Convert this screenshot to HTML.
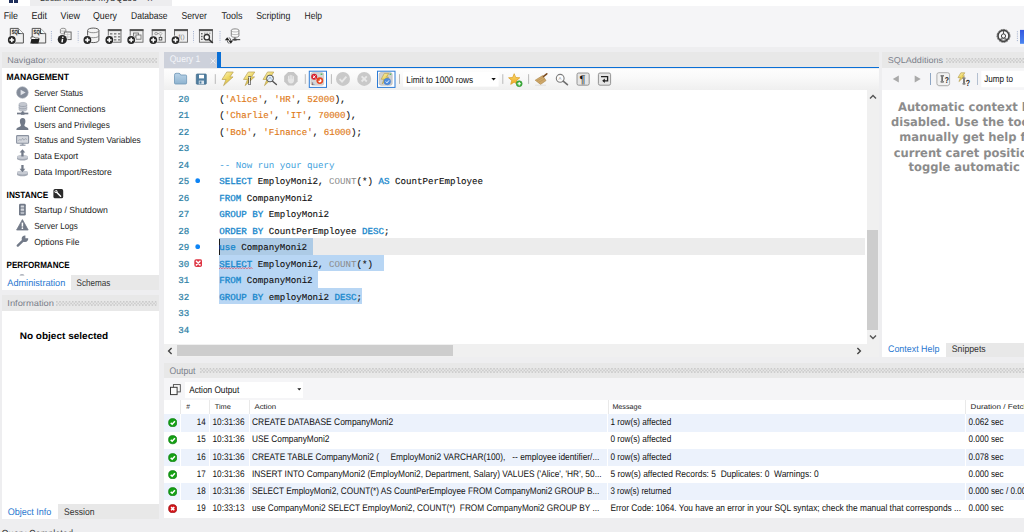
<!DOCTYPE html>
<html><head><meta charset="utf-8"><title>MySQL Workbench</title>
<style>
html,body{margin:0;padding:0}
body{width:1024px;height:532px;overflow:hidden;position:relative;background:#eeeef0}
.r{position:absolute;margin:0;padding:0;overflow:hidden}
text{white-space:pre;text-rendering:geometricPrecision}
text.s{font-family:"Liberation Sans",sans-serif}
text.m{font-family:"Liberation Mono",monospace}
text.d{font-family:"DejaVu Sans","Liberation Sans",sans-serif}
text.c{font-family:"DejaVu Sans Condensed","DejaVu Sans",sans-serif}
</style></head><body>
<div class="r" style="left:0.00px;top:0.00px;width:1024.00px;height:5.60px;background:#ffffff;"></div>
<div class="r" style="left:30.00px;top:0.00px;width:142.00px;height:5.60px;background:#ededef;"></div>
<div class="r" style="left:8.50px;top:0.00px;width:4.00px;height:2.60px;background:#1f2f5c;"></div>
<div class="r" style="left:14.00px;top:0.00px;width:4.00px;height:2.60px;background:#1f2f5c;"></div>
<div class="r" style="left:0.00px;top:5.60px;width:1024.00px;height:41.30px;background:#f5f5f7;"></div>
<div class="r" style="left:1.50px;top:52.20px;width:157.50px;height:15.50px;background:#e8e8e8;"></div>
<div class="r" style="left:47.00px;top:57.60px;width:110.00px;height:5.00px;background:transparent;background-image:radial-gradient(circle at 0.8px 0.8px,#c2c2c2 0.45px,rgba(194,194,194,0) 0.9px),radial-gradient(circle at 2.4px 2.45px,#c2c2c2 0.45px,rgba(194,194,194,0) 0.9px);background-size:3.2px 3.3px;"></div>
<div class="r" style="left:1.50px;top:67.70px;width:157.50px;height:207.70px;background:#fff;"></div>
<div class="r" style="left:1.50px;top:275.40px;width:157.50px;height:14.60px;background:#e8e8e8;"></div>
<div class="r" style="left:1.50px;top:275.40px;width:69.50px;height:14.60px;background:#fff;"></div>
<div class="r" style="left:1.50px;top:295.40px;width:157.50px;height:15.80px;background:#e8e8e8;"></div>
<div class="r" style="left:56.40px;top:301.20px;width:100.60px;height:5.00px;background:transparent;background-image:radial-gradient(circle at 0.8px 0.8px,#c2c2c2 0.45px,rgba(194,194,194,0) 0.9px),radial-gradient(circle at 2.4px 2.45px,#c2c2c2 0.45px,rgba(194,194,194,0) 0.9px);background-size:3.2px 3.3px;"></div>
<div class="r" style="left:1.50px;top:311.20px;width:157.50px;height:193.20px;background:#fff;"></div>
<div class="r" style="left:1.50px;top:504.40px;width:157.50px;height:14.50px;background:#e8e8e8;"></div>
<div class="r" style="left:1.50px;top:504.40px;width:56.70px;height:14.50px;background:#fff;"></div>
<div class="r" style="left:164.00px;top:51.90px;width:715.00px;height:16.20px;background:#e8e8e8;"></div>
<div class="r" style="left:164.00px;top:51.90px;width:52.50px;height:16.20px;background:#cdd1db;"></div>
<div class="r" style="left:216.50px;top:51.90px;width:4.60px;height:16.60px;background:#0a6fd6;"></div>
<div class="r" style="left:216.50px;top:66.80px;width:662.50px;height:1.70px;background:#0a6fd6;"></div>
<svg class="r" style="left:209.50px;top:57.50px" width="6.00" height="6.00" viewBox="0 0 6.00 6.00"><path d="M0.5 0.5L5.5 5.5M5.5 0.5L0.5 5.5" stroke="#eef1f6" stroke-width="0.9" fill="none"/></svg>
<div class="r" style="left:164.00px;top:68.50px;width:715.00px;height:21.50px;background:linear-gradient(#fdfdfd,#fafafa 35%,#efefef);"></div>
<div class="r" style="left:164.00px;top:90.00px;width:703.00px;height:254.30px;background:#fff;"></div>
<div class="r" style="left:219.00px;top:238.45px;width:646.00px;height:16.50px;background:#ececec;"></div>
<div class="r" style="left:219.00px;top:238.45px;width:93.50px;height:16.55px;background:#adcbe6;"></div>
<div class="r" style="left:219.00px;top:254.95px;width:165.00px;height:16.55px;background:#b8d6f4;"></div>
<div class="r" style="left:219.00px;top:271.45px;width:99.00px;height:16.55px;background:#b8d6f4;"></div>
<div class="r" style="left:219.00px;top:287.95px;width:143.00px;height:16.55px;background:#b8d6f4;"></div>
<div class="r" style="left:218.90px;top:238.50px;width:1.30px;height:16.40px;background:#1a1a1a;"></div>
<svg class="r" style="left:219.00px;top:266.60px" width="33.50" height="2.60" viewBox="0 0 33.50 2.60"><path d="M0 1.9 L1.4 0.5 L2.8 1.9 L4.2 0.5 L5.6 1.9 L7 0.5 L8.4 1.9 L9.8 0.5 L11.2 1.9 L12.6 0.5 L14 1.9 L15.4 0.5 L16.8 1.9 L18.2 0.5 L19.6 1.9 L21 0.5 L22.4 1.9 L23.8 0.5 L25.2 1.9 L26.6 0.5 L28 1.9 L29.4 0.5 L30.8 1.9 L32.2 0.5 L33.5 1.9" stroke="#e04a58" stroke-width="0.75" fill="none"/></svg>
<svg class="r" style="left:195.00px;top:177.70px" width="5.40" height="5.40" viewBox="0 0 5.40 5.40"><circle cx="2.7" cy="2.7" r="2.4" fill="#0d84f5"/></svg>
<svg class="r" style="left:195.00px;top:243.70px" width="5.40" height="5.40" viewBox="0 0 5.40 5.40"><circle cx="2.7" cy="2.7" r="2.4" fill="#0d84f5"/></svg>
<svg class="r" style="left:193.70px;top:258.60px" width="8.40" height="8.20" viewBox="0 0 8.40 8.20"><rect x="0.3" y="0.3" width="7.8" height="7.6" rx="1.8" fill="#de3644"/><path d="M2.4 2.3L6 5.9M6 2.3L2.4 5.9" stroke="#fff" stroke-width="1.5" stroke-linecap="round"/></svg>
<div class="r" style="left:866.80px;top:90.00px;width:12.20px;height:254.30px;background:#f0f0f0;"></div>
<div class="r" style="left:866.80px;top:230.00px;width:11.20px;height:99.70px;background:#cdcdcd;"></div>
<svg class="r" style="left:869.00px;top:94.00px" width="8.00" height="6.00" viewBox="0 0 8.00 6.00"><path d="M1 4.6L4 1.6L7 4.6" stroke="#555" stroke-width="1.4" fill="none"/></svg>
<svg class="r" style="left:869.00px;top:334.00px" width="8.00" height="6.00" viewBox="0 0 8.00 6.00"><path d="M1 1.4L4 4.4L7 1.4" stroke="#555" stroke-width="1.4" fill="none"/></svg>
<div class="r" style="left:164.00px;top:344.30px;width:715.00px;height:12.70px;background:#f0f0f0;"></div>
<div class="r" style="left:177.30px;top:345.00px;width:276.20px;height:11.40px;background:#cdcdcd;"></div>
<svg class="r" style="left:166.50px;top:347.00px" width="6.00" height="8.00" viewBox="0 0 6.00 8.00"><path d="M4.6 1L1.6 4L4.6 7" stroke="#444" stroke-width="1.4" fill="none"/></svg>
<svg class="r" style="left:855.50px;top:347.00px" width="6.00" height="8.00" viewBox="0 0 6.00 8.00"><path d="M1.4 1L4.4 4L1.4 7" stroke="#444" stroke-width="1.4" fill="none"/></svg>
<div class="r" style="left:164.30px;top:362.80px;width:859.70px;height:15.40px;background:#e8e8e8;"></div>
<div class="r" style="left:199.50px;top:367.90px;width:824.50px;height:5.00px;background:transparent;background-image:radial-gradient(circle at 0.8px 0.8px,#c2c2c2 0.45px,rgba(194,194,194,0) 0.9px),radial-gradient(circle at 2.4px 2.45px,#c2c2c2 0.45px,rgba(194,194,194,0) 0.9px);background-size:3.2px 3.3px;"></div>
<div class="r" style="left:164.00px;top:378.00px;width:860.00px;height:21.60px;background:#f5f5f7;"></div>
<div class="r" style="left:185.40px;top:382.00px;width:118.00px;height:15.90px;background:#fff;"></div>
<svg class="r" style="left:296.50px;top:388.00px" width="4.50" height="3.00" viewBox="0 0 4.50 3.00"><path d="M0.3 0.3L4.2 0.3L2.25 2.6Z" fill="#222"/></svg>
<svg class="r" style="left:169.00px;top:383.00px" width="13.00" height="13.00" viewBox="0 0 13.00 13.00"><rect x="4.4" y="1.6" width="6.9" height="7.3" fill="#fafafa" stroke="#4a4a4a" stroke-width="0.9"/><rect x="1.5" y="4.3" width="6.6" height="7.3" fill="#fafafa" stroke="#3a3a3a" stroke-width="1"/></svg>
<div class="r" style="left:164.00px;top:399.60px;width:860.00px;height:118.60px;background:#fff;"></div>
<div class="r" style="left:164.00px;top:414.40px;width:16.30px;height:17.20px;background:#ecf2fc;"></div>
<div class="r" style="left:181.10px;top:414.40px;width:27.90px;height:17.20px;background:#ecf2fc;"></div>
<div class="r" style="left:209.80px;top:414.40px;width:39.50px;height:17.20px;background:#ecf2fc;"></div>
<div class="r" style="left:250.10px;top:414.40px;width:357.40px;height:17.20px;background:#ecf2fc;"></div>
<div class="r" style="left:608.30px;top:414.40px;width:356.90px;height:17.20px;background:#ecf2fc;"></div>
<div class="r" style="left:966.00px;top:414.40px;width:58.50px;height:17.20px;background:#ecf2fc;"></div>
<div class="r" style="left:164.00px;top:448.80px;width:16.30px;height:17.20px;background:#ecf2fc;"></div>
<div class="r" style="left:181.10px;top:448.80px;width:27.90px;height:17.20px;background:#ecf2fc;"></div>
<div class="r" style="left:209.80px;top:448.80px;width:39.50px;height:17.20px;background:#ecf2fc;"></div>
<div class="r" style="left:250.10px;top:448.80px;width:357.40px;height:17.20px;background:#ecf2fc;"></div>
<div class="r" style="left:608.30px;top:448.80px;width:356.90px;height:17.20px;background:#ecf2fc;"></div>
<div class="r" style="left:966.00px;top:448.80px;width:58.50px;height:17.20px;background:#ecf2fc;"></div>
<div class="r" style="left:164.00px;top:483.20px;width:16.30px;height:17.20px;background:#ecf2fc;"></div>
<div class="r" style="left:181.10px;top:483.20px;width:27.90px;height:17.20px;background:#ecf2fc;"></div>
<div class="r" style="left:209.80px;top:483.20px;width:39.50px;height:17.20px;background:#ecf2fc;"></div>
<div class="r" style="left:250.10px;top:483.20px;width:357.40px;height:17.20px;background:#ecf2fc;"></div>
<div class="r" style="left:608.30px;top:483.20px;width:356.90px;height:17.20px;background:#ecf2fc;"></div>
<div class="r" style="left:966.00px;top:483.20px;width:58.50px;height:17.20px;background:#ecf2fc;"></div>
<div class="r" style="left:180.30px;top:400.00px;width:0.80px;height:14.30px;background:#e9e9e9;"></div>
<div class="r" style="left:209.00px;top:400.00px;width:0.80px;height:14.30px;background:#e9e9e9;"></div>
<div class="r" style="left:249.30px;top:400.00px;width:0.80px;height:14.30px;background:#e9e9e9;"></div>
<div class="r" style="left:607.50px;top:400.00px;width:0.80px;height:14.30px;background:#e9e9e9;"></div>
<div class="r" style="left:965.20px;top:400.00px;width:0.80px;height:14.30px;background:#e9e9e9;"></div>
<svg class="r" style="left:167.50px;top:418.10px" width="9.40" height="9.40" viewBox="0 0 9.40 9.40"><circle cx="4.7" cy="4.7" r="4.1" fill="#14a014" stroke="#0c7c10" stroke-width="0.7"/><path d="M2.7 4.9L4.2 6.3L6.9 3.3" stroke="#fff" stroke-width="1.5" fill="none"/></svg>
<svg class="r" style="left:167.50px;top:435.30px" width="9.40" height="9.40" viewBox="0 0 9.40 9.40"><circle cx="4.7" cy="4.7" r="4.1" fill="#14a014" stroke="#0c7c10" stroke-width="0.7"/><path d="M2.7 4.9L4.2 6.3L6.9 3.3" stroke="#fff" stroke-width="1.5" fill="none"/></svg>
<svg class="r" style="left:167.50px;top:452.50px" width="9.40" height="9.40" viewBox="0 0 9.40 9.40"><circle cx="4.7" cy="4.7" r="4.1" fill="#14a014" stroke="#0c7c10" stroke-width="0.7"/><path d="M2.7 4.9L4.2 6.3L6.9 3.3" stroke="#fff" stroke-width="1.5" fill="none"/></svg>
<svg class="r" style="left:167.50px;top:469.70px" width="9.40" height="9.40" viewBox="0 0 9.40 9.40"><circle cx="4.7" cy="4.7" r="4.1" fill="#14a014" stroke="#0c7c10" stroke-width="0.7"/><path d="M2.7 4.9L4.2 6.3L6.9 3.3" stroke="#fff" stroke-width="1.5" fill="none"/></svg>
<svg class="r" style="left:167.50px;top:486.90px" width="9.40" height="9.40" viewBox="0 0 9.40 9.40"><circle cx="4.7" cy="4.7" r="4.1" fill="#14a014" stroke="#0c7c10" stroke-width="0.7"/><path d="M2.7 4.9L4.2 6.3L6.9 3.3" stroke="#fff" stroke-width="1.5" fill="none"/></svg>
<svg class="r" style="left:167.50px;top:504.10px" width="9.40" height="9.40" viewBox="0 0 9.40 9.40"><circle cx="4.7" cy="4.7" r="4.1" fill="#d41418" stroke="#931216" stroke-width="0.7"/><path d="M3.1 3.1L6.3 6.3M6.3 3.1L3.1 6.3" stroke="#fff" stroke-width="1.6" fill="none"/></svg>
<div class="r" style="left:882.10px;top:52.20px;width:141.90px;height:15.50px;background:#e8e8e8;"></div>
<div class="r" style="left:946.00px;top:57.60px;width:78.00px;height:5.00px;background:transparent;background-image:radial-gradient(circle at 0.8px 0.8px,#c2c2c2 0.45px,rgba(194,194,194,0) 0.9px),radial-gradient(circle at 2.4px 2.45px,#c2c2c2 0.45px,rgba(194,194,194,0) 0.9px);background-size:3.2px 3.3px;"></div>
<div class="r" style="left:882.10px;top:68.00px;width:141.90px;height:21.60px;background:#f5f5f7;"></div>
<div class="r" style="left:882.10px;top:89.60px;width:141.90px;height:253.40px;background:#fff;"></div>
<div class="r" style="left:882.10px;top:343.00px;width:141.90px;height:14.00px;background:#e8e8e8;"></div>
<div class="r" style="left:882.10px;top:343.00px;width:64.10px;height:14.00px;background:#fff;"></div>
<svg class="r" style="left:892.00px;top:75.00px" width="7.50" height="8.00" viewBox="0 0 7.50 8.00"><path d="M6.8 0.6L0.8 4L6.8 7.4Z" fill="#a9a9a9"/></svg>
<svg class="r" style="left:913.50px;top:75.00px" width="7.50" height="8.00" viewBox="0 0 7.50 8.00"><path d="M0.7 0.6L6.7 4L0.7 7.4Z" fill="#a9a9a9"/></svg>
<div class="r" style="left:929.90px;top:72.80px;width:1.10px;height:12.00px;background:#8ea6c4;"></div>
<div class="r" style="left:977.00px;top:72.80px;width:1.40px;height:12.00px;background:#b3bfd0;"></div>
<svg class="r" style="left:0;top:22px" width="1024" height="28" viewBox="0 22 1024 28"><path d="M10.3 28.4H18.2L23.4 33.6V43H10.3Z" fill="#f0f0f0" stroke="#555" stroke-width="1" stroke-linejoin="round"/><path d="M18.2 28.4V33.6H23.4" fill="#fafafa" stroke="#4a4a4a" stroke-width="0.8"/><text x="11.700000000000001" y="34.0" font-family="Liberation Sans,sans-serif" font-weight="bold" font-size="6" fill="#333" stroke="#333" stroke-width="0.15" textLength="8.499999999999998" lengthAdjust="spacingAndGlyphs">SQL</text><circle cx="11.8" cy="40" r="4.5" fill="#f5f5f7"/><circle cx="11.8" cy="40" r="3.9" fill="#262626"/><path d="M9.5 40H14.100000000000001M11.8 37.7V42.3" stroke="#fff" stroke-width="1.5"/><path d="M32.2 28.4H40.5L45.7 33.6V43H32.2Z" fill="#f0f0f0" stroke="#555" stroke-width="1" stroke-linejoin="round"/><path d="M40.5 28.4V33.6H45.7" fill="#fafafa" stroke="#4a4a4a" stroke-width="0.8"/><text x="33.6" y="34.0" font-family="Liberation Sans,sans-serif" font-weight="bold" font-size="6" fill="#333" stroke="#333" stroke-width="0.15" textLength="8.9" lengthAdjust="spacingAndGlyphs">SQL</text><path d="M30.3 43.4L31.6 38.6H39.6L38.4 43.4Z" fill="#1f1f1f"/><path d="M31 39V37H34.2L35 38H38.6V39" fill="#fff" stroke="#333" stroke-width="0.7"/><path d="M51.4 31V42.3" stroke="#93a3c6" stroke-width="0.8" stroke-dasharray="1.1 1.1"/><path d="M60.4 29.4C60.4 27.9 65.9 27.9 65.9 29.4V33C65.9 34.4 60.4 34.4 60.4 33Z" fill="#f2f2f2" stroke="#7a7a7a" stroke-width="0.8"/><path d="M60.4 30.2C60.4 31.4 65.9 31.4 65.9 30.2" fill="none" stroke="#9a9a9a" stroke-width="0.6"/><rect x="64.3" y="32" width="6.8" height="7.6" fill="#f4f4f4" stroke="#5a5a5a" stroke-width="0.9"/><path d="M64.3 34.5H71M64.3 37H71M67.7 32V39.6" stroke="#bdbdbd" stroke-width="0.6"/><circle cx="62.3" cy="39.5" r="5.1" fill="#f5f5f7"/><circle cx="62.3" cy="39.5" r="4.6" fill="#262626"/><path d="M62.9 36.6L62 42.4" stroke="#fff" stroke-width="1.5" stroke-dasharray="1.3 0.9 6"/><path d="M78.2 31V42.3" stroke="#93a3c6" stroke-width="0.8" stroke-dasharray="1.1 1.1"/><path d="M87.6 30.4C87.6 27.3 98.9 27.3 98.9 30.4V40.2C98.9 43.4 87.6 43.4 87.6 40.2Z" fill="#f4f4f4" stroke="#5c5c5c" stroke-width="1"/><path d="M87.6 30.6C87.6 33.4 98.9 33.4 98.9 30.6M87.6 35.6C87.6 38.4 98.9 38.4 98.9 35.6" fill="none" stroke="#7a7a7a" stroke-width="0.8"/><circle cx="87.4" cy="40" r="4.5" fill="#f5f5f7"/><circle cx="87.4" cy="40" r="3.9" fill="#262626"/><path d="M85.10000000000001 40H89.7M87.4 37.7V42.3" stroke="#fff" stroke-width="1.5"/><rect x="108.3" y="29.6" width="12.700000000000003" height="12.600000000000001" fill="#efefef" stroke="#666" stroke-width="0.9"/><rect x="107.85" y="29.2" width="13.600000000000003" height="1.9" fill="#555"/><rect x="110" y="33" width="2.4" height="1.6" fill="#8c8c8c"/><rect x="114" y="33" width="2.4" height="1.6" fill="#8c8c8c"/><rect x="118" y="33" width="2.4" height="1.6" fill="#8c8c8c"/><rect x="110" y="36" width="2.4" height="1.6" fill="#8c8c8c"/><rect x="114" y="36" width="2.4" height="1.6" fill="#8c8c8c"/><rect x="118" y="36" width="2.4" height="1.6" fill="#8c8c8c"/><rect x="110" y="39" width="2.4" height="1.6" fill="#8c8c8c"/><rect x="114" y="39" width="2.4" height="1.6" fill="#8c8c8c"/><rect x="118" y="39" width="2.4" height="1.6" fill="#8c8c8c"/><circle cx="109.3" cy="40" r="4.5" fill="#f5f5f7"/><circle cx="109.3" cy="40" r="3.9" fill="#262626"/><path d="M107.0 40H111.6M109.3 37.7V42.3" stroke="#fff" stroke-width="1.5"/><rect x="130.2" y="29.6" width="12.800000000000011" height="12.600000000000001" fill="#efefef" stroke="#666" stroke-width="0.9"/><rect x="129.75" y="29.2" width="13.700000000000012" height="1.9" fill="#555"/><rect x="133.4" y="33" width="5" height="4" fill="#e4e4e4" stroke="#666" stroke-width="0.8"/><rect x="136" y="35" width="5" height="4.2" fill="#f4f4f4" stroke="#666" stroke-width="0.8"/><circle cx="131.2" cy="40" r="4.5" fill="#f5f5f7"/><circle cx="131.2" cy="40" r="3.9" fill="#262626"/><path d="M128.89999999999998 40H133.5M131.2 37.7V42.3" stroke="#fff" stroke-width="1.5"/><rect x="152.2" y="29.6" width="13.100000000000023" height="12.600000000000001" fill="#efefef" stroke="#666" stroke-width="0.9"/><rect x="151.75" y="29.2" width="14.000000000000023" height="1.9" fill="#555"/><rect x="154.8" y="32.6" width="2.6" height="2" rx="0.6" fill="none" stroke="#777" stroke-width="0.7"/><path d="M160.5 32L162 33.6L160.5 35.2L159 33.6Z" fill="none" stroke="#888" stroke-width="0.6"/><path d="M157.4 33.6H159M160.5 35.2V37" stroke="#777" stroke-width="0.6"/><rect x="159.2" y="37.4" width="2.6" height="2.6" fill="#fff" stroke="#444" stroke-width="0.9"/><circle cx="153.3" cy="40.1" r="4.5" fill="#f5f5f7"/><circle cx="153.3" cy="40.1" r="3.9" fill="#262626"/><path d="M151.0 40.1H155.60000000000002M153.3 37.800000000000004V42.4" stroke="#fff" stroke-width="1.5"/><rect x="174.5" y="29.6" width="13.0" height="12.600000000000001" fill="#efefef" stroke="#666" stroke-width="0.9"/><rect x="174.05" y="29.2" width="13.9" height="1.9" fill="#555"/><text x="178.6" y="39.2" font-family="Liberation Sans,sans-serif" font-size="6.4" fill="#777">f()</text><circle cx="175.5" cy="40.1" r="4.5" fill="#f5f5f7"/><circle cx="175.5" cy="40.1" r="3.9" fill="#262626"/><path d="M173.2 40.1H177.8M175.5 37.800000000000004V42.4" stroke="#fff" stroke-width="1.5"/><path d="M193.5 31V42.3" stroke="#93a3c6" stroke-width="0.8" stroke-dasharray="1.1 1.1"/><rect x="199.4" y="29.6" width="13.0" height="12.600000000000001" fill="#efefef" stroke="#666" stroke-width="0.9"/><rect x="198.95000000000002" y="29.2" width="13.9" height="1.9" fill="#555"/><rect x="201" y="33" width="1.6" height="1.4" fill="#666"/><rect x="201" y="35.8" width="1.6" height="1.4" fill="#666"/><rect x="201" y="38.6" width="1.6" height="1.4" fill="#666"/><path d="M204 33.2H210.6" stroke="#777" stroke-width="0.8" stroke-dasharray="1.6 0.9"/><circle cx="206.8" cy="37.2" r="2.7" fill="#fafafa" stroke="#333" stroke-width="1.3"/><path d="M208.9 39.3L212.8 43" stroke="#333" stroke-width="1.6"/><path d="M220 31V42.3" stroke="#93a3c6" stroke-width="0.8" stroke-dasharray="1.1 1.1"/><path d="M231.3 30.4C231.3 28.4 238.9 28.4 238.9 30.4V35.8C238.9 37.8 231.3 37.8 231.3 35.8Z" fill="#fbfbfb" stroke="#6a6a6a" stroke-width="0.8"/><path d="M231.3 30.6C231.3 32.4 238.9 32.4 238.9 30.6M231.3 33.3C231.3 35.1 238.9 35.1 238.9 33.3" fill="none" stroke="#8a8a8a" stroke-width="0.6"/><path d="M234.9 37.4V39.4" stroke="#555" stroke-width="1.2"/><path d="M232.4 39.6H240.2" stroke="#555" stroke-width="1.2"/><rect x="233.4" y="38.7" width="3.2" height="1.9" fill="#444"/><path d="M224.8 40.3L227.2 37.2L229.6 40.3Z" fill="#222"/><path d="M228.4 40.6L230.8 43.7L233.2 40.6Z" fill="#222"/><path d="M227.2 40.2Q227.2 43 229.4 43.4M230.8 40.7Q230.8 38 228.8 37.6" stroke="#555" stroke-width="0.9" fill="none"/><circle cx="1003.5" cy="35.9" r="5.5" fill="none" stroke="#444" stroke-width="1.6"/><circle cx="1003.5" cy="35.9" r="6.5" fill="none" stroke="#444" stroke-width="0.9" stroke-dasharray="1 0.7"/><circle cx="1003.5" cy="36" r="2.1" fill="none" stroke="#444" stroke-width="1"/><path d="M1003.5 30.5V34M1000 40L1001.8 37.6M1007 40L1005.2 37.6" stroke="#444" stroke-width="0.9"/><path d="M1000.3 39.6Q1003.5 37.6 1006.7 39.6" stroke="#444" stroke-width="0.9" fill="none"/><path d="M1017.4 31.2V41.8" stroke="#93a3c6" stroke-width="0.8" stroke-dasharray="1.1 1.1"/><defs><linearGradient id="bl" x1="0" y1="0" x2="0" y2="1"><stop offset="0" stop-color="#3457e0"/><stop offset="1" stop-color="#4a86f0"/></linearGradient></defs><rect x="1020" y="29.9" width="5" height="13.9" fill="url(#bl)"/></svg>
<svg class="r" style="left:160px;top:68px" width="864" height="22" viewBox="160 68 864 22"><defs><linearGradient id="lg" x1="0" y1="0" x2="0.6" y2="1"><stop offset="0" stop-color="#fdf7cc"/><stop offset="0.5" stop-color="#efd966"/><stop offset="1" stop-color="#d6b844"/></linearGradient><linearGradient id="fg" x1="0" y1="0" x2="0" y2="1"><stop offset="0" stop-color="#b9d3e8"/><stop offset="1" stop-color="#8eb3cf"/></linearGradient><linearGradient id="st" x1="0" y1="0" x2="0" y2="1"><stop offset="0" stop-color="#fbe070"/><stop offset="1" stop-color="#eea520"/></linearGradient></defs><path d="M174.5 75.2Q174.5 73.3 176 73.3H179Q180.2 73.3 180.6 75H185.6Q186.6 75 186.6 76V83Q186.6 84 185.6 84H175.5Q174.5 84 174.5 83Z" fill="url(#fg)" stroke="#6f97b6" stroke-width="0.8"/><rect x="196.3" y="74" width="10" height="10.2" rx="0.8" fill="#4f7d9f" stroke="#3e6888" stroke-width="0.7"/><rect x="199" y="74.8" width="5" height="3.6" fill="#fff"/><rect x="198.8" y="80.6" width="5.2" height="3.6" fill="#d9e3ec"/><rect x="199.6" y="81.4" width="1.8" height="2.2" fill="#4f7d9f"/><path d="M215.3 74.2V83.9" stroke="#b2b2b2" stroke-width="0.9"/><polygon points="226.75,72.00 233.30,72.00 229.91,76.90 233.07,76.90 223.58,85.60 226.07,79.48 222.00,79.48" fill="url(#lg)" stroke="#b9a254" stroke-width="0.7" stroke-linejoin="round"/><polygon points="248.25,72.00 254.80,72.00 251.41,76.90 254.57,76.90 245.08,85.60 247.57,79.48 243.50,79.48" fill="url(#lg)" stroke="#b9a254" stroke-width="0.7" stroke-linejoin="round"/><path d="M248.2 77.3H250.8M249.5 77.3V84M248.2 84H250.8" stroke="#333" stroke-width="2.2"/><path d="M248.4 77.3H250.6M249.5 77.3V84M248.4 84H250.6" stroke="#fff" stroke-width="0.9"/><polygon points="267.54,72.00 273.80,72.00 270.56,76.90 273.58,76.90 264.51,85.60 266.89,79.48 263.00,79.48" fill="url(#lg)" stroke="#b9a254" stroke-width="0.7" stroke-linejoin="round"/><circle cx="270" cy="78.5" r="3.4" fill="#e3eef8" stroke="#555" stroke-width="1"/><path d="M268.4 79.6L270 77L271.6 79.6" stroke="#8fb0d8" stroke-width="0.8" fill="none"/><path d="M272.6 81.2L276.4 84.6" stroke="#555" stroke-width="1.4" stroke-linecap="round"/><polygon points="297.64,81.49 293.69,85.44 288.11,85.44 284.16,81.49 284.16,75.91 288.11,71.96 293.69,71.96 297.64,75.91" fill="#c6c6c6"/><path d="M288.6 80V76.4M290.2 79V75.4M291.8 79V75.6M293.4 80V76.6" stroke="#e6e6e6" stroke-width="1.2" stroke-linecap="round"/><path d="M287.6 79.2Q288 83.4 291 83.4Q294 83.4 294.2 79.4L292 78.6L288.6 79Z" fill="#e6e6e6"/><path d="M305.3 74.2V83.9" stroke="#b2b2b2" stroke-width="0.9"/><rect x="309.3" y="71.2" width="17.2" height="16.2" fill="#fff" stroke="#2b7bd6" stroke-width="1"/><rect x="310.9" y="72.6" width="12.8" height="12.6" rx="1.8" fill="#d6d6d6" stroke="#b5b5b5" stroke-width="0.5"/><rect x="320.6" y="73.6" width="1.8" height="1.2" fill="#39b54a"/><circle cx="314.2" cy="76.8" r="3" fill="#d81e2c"/><path d="M312.9 75.5L315.5 78.1M315.5 75.5L312.9 78.1" stroke="#fff" stroke-width="1"/><circle cx="319.8" cy="80.6" r="3.4" fill="#e8461e"/><path d="M318.2 80.8A1.7 1.7 0 1 0 319.8 79V80.8Z" fill="#fff"/><text x="311.6" y="84.6" font-family="Liberation Sans,sans-serif" font-size="3.6" font-weight="bold" fill="#222">1.</text><path d="M331.4 74.2V83.9" stroke="#b2b2b2" stroke-width="0.9"/><circle cx="343" cy="78.9" r="7" fill="#c9c9c9"/><path d="M339.6 79.2L342 81.6L346.4 76.6" stroke="#e8e8e8" stroke-width="1.8" fill="none"/><circle cx="364.2" cy="78.9" r="7" fill="#c9c9c9"/><path d="M361.6 76.3L366.8 81.5M366.8 76.3L361.6 81.5" stroke="#e8e8e8" stroke-width="1.8"/><rect x="377.5" y="71.2" width="17.5" height="16.2" fill="#fff" stroke="#2b7bd6" stroke-width="1"/><rect x="379.2" y="72.6" width="13" height="12.6" rx="1.8" fill="#d0d0d0" stroke="#a5a5a5" stroke-width="0.5"/><rect x="389.6" y="73.6" width="1.6" height="1.2" fill="#39b54a"/><polygon points="384.39,73.40 388.80,73.40 386.52,77.22 388.65,77.22 382.26,84.00 383.94,79.23 381.20,79.23" fill="url(#lg)" stroke="#b9a254" stroke-width="0.7" stroke-linejoin="round"/><circle cx="387.3" cy="81.5" r="3.3" fill="#4f8de0" stroke="#3a73c4" stroke-width="0.5"/><path d="M385.8 81.6L387 82.8L389 80.4" stroke="#fff" stroke-width="1" fill="none"/><path d="M399.5 74.2V83.9" stroke="#b2b2b2" stroke-width="0.9"/><rect x="403.1" y="72.2" width="95.5" height="14.4" fill="#fff"/><path d="M491.4 78.1H495.8L493.6 80.5Z" fill="#111"/><path d="M502.8 74.2V83.9" stroke="#b2b2b2" stroke-width="0.9"/><polygon points="514.20,73.70 515.73,77.50 519.81,77.78 516.67,80.40 517.67,84.37 514.20,82.20 510.73,84.37 511.73,80.40 508.59,77.78 512.67,77.50" fill="url(#st)" stroke="#d99a1c" stroke-width="0.7" stroke-linejoin="round"/><circle cx="519.2" cy="83.7" r="3" fill="#3cae3c" stroke="#2c8c2c" stroke-width="0.5"/><path d="M517.5 83.7H520.9M519.2 82V85.4" stroke="#fff" stroke-width="1.1"/><path d="M528.6 74.2V83.9" stroke="#b2b2b2" stroke-width="0.9"/><path d="M535.2 80.2L542.6 75.6L546 80.6L540.6 84.4Z" fill="#cfa86a" stroke="#a98448" stroke-width="0.6"/><path d="M537 81L543.6 77M538.6 82.4L544.8 78.8" stroke="#b08c50" stroke-width="0.5"/><path d="M543.6 76.4L546.8 73.8" stroke="#7a4a1e" stroke-width="1.6" stroke-linecap="round"/><path d="M535 85.2H546" stroke="#d8d8d8" stroke-width="0.7"/><circle cx="560.2" cy="78.3" r="3.9" fill="#fdfdfd" stroke="#7c7c7c" stroke-width="1.1"/><text x="558.6" y="80" font-family="Liberation Sans,sans-serif" font-size="4.4" fill="#999">A</text><path d="M563.2 81.2L567.4 84.6" stroke="#6e6e6e" stroke-width="1.7" stroke-linecap="round"/><rect x="577" y="73" width="12.2" height="12.2" rx="1.6" fill="#e6e6e6" stroke="#7e7e7e" stroke-width="0.8"/><text x="579.6" y="83.4" font-family="Liberation Sans,sans-serif" font-size="11" fill="#111">¶</text><rect x="598.4" y="73" width="12.2" height="12.2" rx="1.6" fill="#e6e6e6" stroke="#7e7e7e" stroke-width="0.8"/><path d="M601 76.6H607.6V80.8H603.4" stroke="#222" stroke-width="1.3" fill="none"/><path d="M604.8 78.6L602.2 80.8L604.8 83Z" fill="#222"/><rect x="936.9" y="72.7" width="12.7" height="12.8" rx="2" fill="#f1f1f1" stroke="#9a9a9a" stroke-width="0.8"/><path d="M938.5 85.9H948" stroke="#c4c4c4" stroke-width="0.8"/><path d="M940.7 75.7H943.7M942.2 75.7V81.7M940.7 81.7H943.7" stroke="#3a3a3a" stroke-width="1.6"/><path d="M941.0 75.7H943.4000000000001M942.2 75.7V81.7M941.0 81.7H943.4000000000001" stroke="#e8e8e8" stroke-width="0.45"/><text x="944.8" y="83.4" font-family="Liberation Sans,sans-serif" font-weight="bold" font-size="8.6" fill="#2a2a2a" transform="translate(944.8 0) scale(0.8 1) translate(-944.8 0)">?</text><polygon points="960.86,72.80 964.80,72.80 962.76,75.97 964.66,75.97 958.95,81.60 960.45,77.64 958.00,77.64" fill="url(#lg)" stroke="#b9a254" stroke-width="0.7" stroke-linejoin="round"/><path d="M962.7 78.2H965.3000000000001M964.0 78.2V83.8M962.7 83.8H965.3000000000001" stroke="#3a3a3a" stroke-width="1.6"/><path d="M963.0 78.2H965.0000000000001M964.0 78.2V83.8M963.0 83.8H965.0000000000001" stroke="#e8e8e8" stroke-width="0.45"/><text x="965.8" y="86.4" font-family="Liberation Sans,sans-serif" font-weight="bold" font-size="8.8" fill="#2a2a2a" transform="translate(965.8 0) scale(0.8 1) translate(-965.8 0)">?</text><rect x="981.3" y="70.8" width="43" height="16.4" fill="#fff"/></svg>
<svg class="r" style="left:0;top:84px" width="70" height="192" viewBox="0 84 70 192"><circle cx="22.4" cy="92.5" r="5.8" fill="#848c9a"/><circle cx="22.4" cy="92.5" r="5.8" fill="none" stroke="#a5abb6" stroke-width="0.6"/><path d="M20.6 89.7L25.6 92.5L20.6 95.3Z" fill="#dfe2e8"/><path d="M19 104C19 101.9 26.8 101.9 26.8 104V109.6C26.8 111.7 19 111.7 19 109.6Z" fill="#c3c7cf" stroke="#9aa0ac" stroke-width="0.5"/><path d="M19 105.3C19 106.9 26.8 106.9 26.8 105.3M19 107.6C19 109.2 26.8 109.2 26.8 107.6" stroke="#8f96a3" stroke-width="0.7" fill="none"/><path d="M22.7 111.2V113.4" stroke="#727a88" stroke-width="1.6"/><path d="M17 113.5H28.3" stroke="#727a88" stroke-width="1.7"/><rect x="20.9" y="112.3" width="3.6" height="2.5" rx="0.6" fill="#727a88"/><path d="M22.7 118C24.7 118 25.5 119.6 25.4 121.4C25.3 123.2 24.6 124.2 24.4 125C24.3 126 25 126.5 26.6 127.2C28.2 127.9 28.4 128.6 28.4 129.9H16.4C16.4 128.6 16.8 127.9 18.6 127.2C20.3 126.5 21 126 20.9 125C20.7 124.2 20 123.2 19.9 121.4C19.8 119.6 20.7 118 22.7 118Z" fill="#727a88"/><rect x="16.6" y="135.6" width="12" height="7.7" rx="0.8" fill="#d3d6dc" stroke="#8a92a0" stroke-width="1.1"/><path d="M18.2 140.6L20 139.4L21.2 140.4L22.6 138.2L23.8 140.2L25.2 138.6L27 139.6" stroke="#8a92a0" stroke-width="0.6" fill="none"/><path d="M22.6 143.4V144.8" stroke="#8a92a0" stroke-width="2"/><path d="M19.8 145.2H25.5" stroke="#8a92a0" stroke-width="1.1"/><path d="M17 157.0C17 154.6 27.9 154.6 27.9 157.0V158.79999999999998C27.9 161.2 17 161.2 17 158.79999999999998Z" fill="#a3a9b4"/><ellipse cx="22.45" cy="157.0" rx="5.45" ry="1.9" fill="#c7cbd3"/><path d="M22.45 149.2L25.3 152.6H23.6V156.4H21.3V152.6H19.6Z" fill="#727a88"/><path d="M17 172.60000000000002C17 170.20000000000002 27.9 170.20000000000002 27.9 172.60000000000002V174.4C27.9 176.8 17 176.8 17 174.4Z" fill="#a3a9b4"/><ellipse cx="22.45" cy="172.60000000000002" rx="5.45" ry="1.9" fill="#c7cbd3"/><path d="M22.45 172.2L25.3 168.8H23.6V165H21.3V168.8H19.6Z" fill="#727a88"/><rect x="53.4" y="189.1" width="9.8" height="9.2" rx="1.6" fill="#2b2b2b"/><path d="M55.6 191.2L60.6 196.2" stroke="#fff" stroke-width="1.5" stroke-linecap="round"/><circle cx="56" cy="191.6" r="1.5" fill="#fff"/><path d="M54.6 190.2L56.4 192" stroke="#2b2b2b" stroke-width="1"/><rect x="19" y="203.8" width="6.8" height="11.8" rx="1.4" fill="#727a88"/><rect x="20.7" y="205.4" width="3.4" height="2.2" rx="0.5" fill="#d5d8de"/><rect x="20.7" y="208.6" width="3.4" height="2.2" rx="0.5" fill="#d5d8de"/><rect x="20.7" y="211.8" width="3.4" height="2.2" rx="0.5" fill="#b5bac4"/><path d="M22.4 219.6L28.2 230H16.6Z" fill="#727a88" stroke="#727a88" stroke-width="0.8" stroke-linejoin="round"/><path d="M22.4 222.6V226.6" stroke="#fff" stroke-width="1.5"/><circle cx="22.4" cy="228.2" r="0.85" fill="#fff"/><path d="M17.8 245.6L24 239.6" stroke="#727a88" stroke-width="2.4" stroke-linecap="round"/><path d="M28.2 238.2A3.3 3.3 0 1 1 25.4 235.5L25.4 238.2Z" fill="#727a88"/><path d="M19.6 275.4C19.6 273.8 24.4 273.8 24.4 275.4Z" fill="#9aa0ac"/></svg>
<svg class="r" style="left:0;top:0" width="1024" height="532" viewBox="0 0 1024 532">
<text class="s" transform="translate(40.00 1.40) scale(0.8725 1)" font-size="10" fill="#333">Local instance MySQL80</text>
<text class="s" transform="translate(147.00 1.60)" font-size="10" fill="#333">×</text>
<text class="s" transform="translate(3.70 18.80) scale(0.8874 1)" font-size="10" fill="#1a1a1a">File</text>
<text class="s" transform="translate(31.50 18.80) scale(0.8995 1)" font-size="10" fill="#1a1a1a">Edit</text>
<text class="s" transform="translate(60.60 18.80) scale(0.9025 1)" font-size="10" fill="#1a1a1a">View</text>
<text class="s" transform="translate(93.00 18.80) scale(0.8813 1)" font-size="10" fill="#1a1a1a">Query</text>
<text class="s" transform="translate(131.00 18.80) scale(0.8526 1)" font-size="10" fill="#1a1a1a">Database</text>
<text class="s" transform="translate(181.40 18.80) scale(0.8623 1)" font-size="10" fill="#1a1a1a">Server</text>
<text class="s" transform="translate(221.60 18.80) scale(0.8953 1)" font-size="10" fill="#1a1a1a">Tools</text>
<text class="s" transform="translate(256.20 18.80) scale(0.8790 1)" font-size="10" fill="#1a1a1a">Scripting</text>
<text class="s" transform="translate(304.50 18.80) scale(0.8509 1)" font-size="10" fill="#1a1a1a">Help</text>
<text class="s" transform="translate(7.30 62.70) scale(1.0638 1)" font-size="8.5" fill="#7b808b">Navigator</text>
<text class="s" transform="translate(6.60 80.00) scale(0.9527 1)" font-size="9" fill="#000" font-weight='bold'>MANAGEMENT</text>
<text class="s" transform="translate(34.20 96.00) scale(0.9106 1)" font-size="8.9" fill="#1a1a1a">Server Status</text>
<text class="s" transform="translate(34.20 112.00) scale(0.9558 1)" font-size="8.9" fill="#1a1a1a">Client Connections</text>
<text class="s" transform="translate(34.20 128.00) scale(0.9287 1)" font-size="8.9" fill="#1a1a1a">Users and Privileges</text>
<text class="s" transform="translate(34.20 143.00) scale(0.9400 1)" font-size="8.9" fill="#1a1a1a">Status and System Variables</text>
<text class="s" transform="translate(34.20 159.00) scale(0.9363 1)" font-size="8.9" fill="#1a1a1a">Data Export</text>
<text class="s" transform="translate(34.20 175.00) scale(0.9709 1)" font-size="8.9" fill="#1a1a1a">Data Import/Restore</text>
<text class="s" transform="translate(6.60 197.60) scale(0.9176 1)" font-size="9" fill="#000" font-weight='bold'>INSTANCE</text>
<text class="s" transform="translate(34.20 213.40) scale(0.9749 1)" font-size="8.9" fill="#1a1a1a">Startup / Shutdown</text>
<text class="s" transform="translate(34.20 229.00) scale(0.9086 1)" font-size="8.9" fill="#1a1a1a">Server Logs</text>
<text class="s" transform="translate(34.20 245.00) scale(0.9540 1)" font-size="8.9" fill="#1a1a1a">Options File</text>
<text class="s" transform="translate(6.60 267.50) scale(0.8950 1)" font-size="9" fill="#000" font-weight='bold'>PERFORMANCE</text>
<text class="s" transform="translate(7.30 285.60) scale(0.9636 1)" font-size="9.5" fill="#2a78d0">Administration</text>
<text class="s" transform="translate(76.50 285.60) scale(0.8535 1)" font-size="9.5" fill="#333">Schemas</text>
<text class="s" transform="translate(7.30 306.00) scale(1.0983 1)" font-size="8.5" fill="#7b808b">Information</text>
<text class="s" transform="translate(19.70 339.10) scale(1.0445 1)" font-size="9.6" fill="#000" font-weight='bold'>No object selected</text>
<text class="s" transform="translate(7.70 515.00) scale(0.9512 1)" font-size="9.5" fill="#2a78d0">Object Info</text>
<text class="s" transform="translate(64.00 515.00) scale(0.9024 1)" font-size="9.5" fill="#333">Session</text>
<text class="s" transform="translate(1.50 537.60) scale(0.7603 1)" font-size="12" fill="#333">Query Completed</text>
<text class="s" transform="translate(169.70 62.00) scale(0.9025 1)" font-size="9.5" fill="#f4f6fa">Query 1</text>
<text class="m" transform="translate(178.30 101.80)" font-size="9.17" fill="#2d7fa6"><tspan fill="#2d7fa6" stroke="#2d7fa6" stroke-width="0.2">20</tspan></text>
<text class="m" transform="translate(178.30 118.30)" font-size="9.17" fill="#2d7fa6"><tspan fill="#2d7fa6" stroke="#2d7fa6" stroke-width="0.2">21</tspan></text>
<text class="m" transform="translate(178.30 134.80)" font-size="9.17" fill="#2d7fa6"><tspan fill="#2d7fa6" stroke="#2d7fa6" stroke-width="0.2">22</tspan></text>
<text class="m" transform="translate(178.30 151.30)" font-size="9.17" fill="#2d7fa6"><tspan fill="#2d7fa6" stroke="#2d7fa6" stroke-width="0.2">23</tspan></text>
<text class="m" transform="translate(178.30 167.80)" font-size="9.17" fill="#2d7fa6"><tspan fill="#2d7fa6" stroke="#2d7fa6" stroke-width="0.2">24</tspan></text>
<text class="m" transform="translate(178.30 184.30)" font-size="9.17" fill="#2d7fa6"><tspan fill="#2d7fa6" stroke="#2d7fa6" stroke-width="0.2">25</tspan></text>
<text class="m" transform="translate(178.30 200.80)" font-size="9.17" fill="#2d7fa6"><tspan fill="#2d7fa6" stroke="#2d7fa6" stroke-width="0.2">26</tspan></text>
<text class="m" transform="translate(178.30 217.30)" font-size="9.17" fill="#2d7fa6"><tspan fill="#2d7fa6" stroke="#2d7fa6" stroke-width="0.2">27</tspan></text>
<text class="m" transform="translate(178.30 233.80)" font-size="9.17" fill="#2d7fa6"><tspan fill="#2d7fa6" stroke="#2d7fa6" stroke-width="0.2">28</tspan></text>
<text class="m" transform="translate(178.30 250.30)" font-size="9.17" fill="#2d7fa6"><tspan fill="#2d7fa6" stroke="#2d7fa6" stroke-width="0.2">29</tspan></text>
<text class="m" transform="translate(178.30 266.80)" font-size="9.17" fill="#2d7fa6"><tspan fill="#2d7fa6" stroke="#2d7fa6" stroke-width="0.2">30</tspan></text>
<text class="m" transform="translate(178.30 283.30)" font-size="9.17" fill="#2d7fa6"><tspan fill="#2d7fa6" stroke="#2d7fa6" stroke-width="0.2">31</tspan></text>
<text class="m" transform="translate(178.30 299.80)" font-size="9.17" fill="#2d7fa6"><tspan fill="#2d7fa6" stroke="#2d7fa6" stroke-width="0.2">32</tspan></text>
<text class="m" transform="translate(178.30 316.30)" font-size="9.17" fill="#2d7fa6"><tspan fill="#2d7fa6" stroke="#2d7fa6" stroke-width="0.2">33</tspan></text>
<text class="m" transform="translate(178.30 332.80)" font-size="9.17" fill="#2d7fa6"><tspan fill="#2d7fa6" stroke="#2d7fa6" stroke-width="0.2">34</tspan></text>
<text class="m" transform="translate(219.20 101.80)" font-size="9.17" fill="#111"><tspan fill="#111" stroke="#111" stroke-width="0.12">(</tspan><tspan fill="#e07a18" stroke="#e07a18" stroke-width="0.15">'Alice'</tspan><tspan fill="#111" stroke="#111" stroke-width="0.12">, </tspan><tspan fill="#e07a18" stroke="#e07a18" stroke-width="0.15">'HR'</tspan><tspan fill="#111" stroke="#111" stroke-width="0.12">, </tspan><tspan fill="#e07a19" stroke="#e07a19" stroke-width="0.15">52000</tspan><tspan fill="#111" stroke="#111" stroke-width="0.12">),</tspan></text>
<text class="m" transform="translate(219.20 118.30)" font-size="9.17" fill="#111"><tspan fill="#111" stroke="#111" stroke-width="0.12">(</tspan><tspan fill="#e07a18" stroke="#e07a18" stroke-width="0.15">'Charlie'</tspan><tspan fill="#111" stroke="#111" stroke-width="0.12">, </tspan><tspan fill="#e07a18" stroke="#e07a18" stroke-width="0.15">'IT'</tspan><tspan fill="#111" stroke="#111" stroke-width="0.12">, </tspan><tspan fill="#e07a19" stroke="#e07a19" stroke-width="0.15">70000</tspan><tspan fill="#111" stroke="#111" stroke-width="0.12">),</tspan></text>
<text class="m" transform="translate(219.20 134.80)" font-size="9.17" fill="#111"><tspan fill="#111" stroke="#111" stroke-width="0.12">(</tspan><tspan fill="#e07a18" stroke="#e07a18" stroke-width="0.15">'Bob'</tspan><tspan fill="#111" stroke="#111" stroke-width="0.12">, </tspan><tspan fill="#e07a18" stroke="#e07a18" stroke-width="0.15">'Finance'</tspan><tspan fill="#111" stroke="#111" stroke-width="0.12">, </tspan><tspan fill="#e07a19" stroke="#e07a19" stroke-width="0.15">61000</tspan><tspan fill="#111" stroke="#111" stroke-width="0.12">);</tspan></text>
<text class="m" transform="translate(219.20 167.80)" font-size="9.17" fill="#111"><tspan fill="#3f9fdc">-- Now run your query</tspan></text>
<text class="m" transform="translate(219.20 184.30)" font-size="9.17" fill="#111"><tspan fill="#1787cc" stroke="#1787cc" stroke-width="0.3">SELECT</tspan><tspan fill="#111" stroke="#111" stroke-width="0.12"> EmployMoni2, </tspan><tspan fill="#8a8a8a">COUNT</tspan><tspan fill="#111" stroke="#111" stroke-width="0.12">(*) </tspan><tspan fill="#1787cc" stroke="#1787cc" stroke-width="0.3">AS</tspan><tspan fill="#111" stroke="#111" stroke-width="0.12"> CountPerEmployee</tspan></text>
<text class="m" transform="translate(219.20 200.80)" font-size="9.17" fill="#111"><tspan fill="#1787cc" stroke="#1787cc" stroke-width="0.3">FROM</tspan><tspan fill="#111" stroke="#111" stroke-width="0.12"> CompanyMoni2</tspan></text>
<text class="m" transform="translate(219.20 217.30)" font-size="9.17" fill="#111"><tspan fill="#1787cc" stroke="#1787cc" stroke-width="0.3">GROUP BY</tspan><tspan fill="#111" stroke="#111" stroke-width="0.12"> EmployMoni2</tspan></text>
<text class="m" transform="translate(219.20 233.80)" font-size="9.17" fill="#111"><tspan fill="#1787cc" stroke="#1787cc" stroke-width="0.3">ORDER BY</tspan><tspan fill="#111" stroke="#111" stroke-width="0.12"> CountPerEmployee </tspan><tspan fill="#1787cc" stroke="#1787cc" stroke-width="0.3">DESC</tspan><tspan fill="#111" stroke="#111" stroke-width="0.12">;</tspan></text>
<text class="m" transform="translate(219.20 250.30)" font-size="9.17" fill="#111"><tspan fill="#1787cc" stroke="#1787cc" stroke-width="0.3">use</tspan><tspan fill="#111" stroke="#111" stroke-width="0.12"> CompanyMoni2</tspan></text>
<text class="m" transform="translate(219.20 266.80)" font-size="9.17" fill="#111"><tspan fill="#1787cc" stroke="#1787cc" stroke-width="0.3">SELECT</tspan><tspan fill="#111" stroke="#111" stroke-width="0.12"> EmployMoni2, </tspan><tspan fill="#8a8a8a">COUNT</tspan><tspan fill="#111" stroke="#111" stroke-width="0.12">(*) </tspan></text>
<text class="m" transform="translate(219.20 283.30)" font-size="9.17" fill="#111"><tspan fill="#1787cc" stroke="#1787cc" stroke-width="0.3">FROM</tspan><tspan fill="#111" stroke="#111" stroke-width="0.12"> CompanyMoni2</tspan></text>
<text class="m" transform="translate(219.20 299.80)" font-size="9.17" fill="#111"><tspan fill="#1787cc" stroke="#1787cc" stroke-width="0.3">GROUP BY</tspan><tspan fill="#111" stroke="#111" stroke-width="0.12"> employMoni2 </tspan><tspan fill="#1787cc" stroke="#1787cc" stroke-width="0.3">DESC</tspan><tspan fill="#111" stroke="#111" stroke-width="0.12">;</tspan></text>
<text class="s" transform="translate(169.60 374.00) scale(0.9082 1)" font-size="9.5" fill="#7b808b">Output</text>
<text class="s" transform="translate(189.20 393.30) scale(0.8686 1)" font-size="9.5" fill="#111">Action Output</text>
<text class="s" transform="translate(186.20 409.40) scale(0.9504 1)" font-size="7" fill="#222">#</text>
<text class="s" transform="translate(214.70 409.40) scale(1.0526 1)" font-size="7" fill="#222">Time</text>
<text class="s" transform="translate(254.40 409.40) scale(1.1205 1)" font-size="7" fill="#222">Action</text>
<text class="s" transform="translate(612.40 409.40) scale(1.0210 1)" font-size="7" fill="#222">Message</text>
<text class="s" transform="translate(970.60 409.40) scale(1.1526 1)" font-size="7" fill="#222">Duration / Fetch</text>
<text class="s" transform="translate(196.80 425.10) scale(0.8422 1)" font-size="9.5" fill="#111">14</text>
<text class="s" transform="translate(212.50 425.10) scale(0.8653 1)" font-size="9.5" fill="#111">10:31:36</text>
<text class="s" transform="translate(252.00 425.10) scale(0.8885 1)" font-size="9.5" fill="#111">CREATE DATABASE CompanyMoni2</text>
<text class="s" transform="translate(610.40 425.10) scale(0.8614 1)" font-size="9.5" fill="#111">1 row(s) affected</text>
<text class="s" transform="translate(968.50 425.10) scale(0.8540 1)" font-size="9.5" fill="#111">0.062 sec</text>
<text class="s" transform="translate(196.80 442.30) scale(0.8422 1)" font-size="9.5" fill="#111">15</text>
<text class="s" transform="translate(212.50 442.30) scale(0.8653 1)" font-size="9.5" fill="#111">10:31:36</text>
<text class="s" transform="translate(252.00 442.30) scale(0.8725 1)" font-size="9.5" fill="#111">USE CompanyMoni2</text>
<text class="s" transform="translate(610.40 442.30) scale(0.8614 1)" font-size="9.5" fill="#111">0 row(s) affected</text>
<text class="s" transform="translate(968.50 442.30) scale(0.8540 1)" font-size="9.5" fill="#111">0.000 sec</text>
<text class="s" transform="translate(196.80 459.50) scale(0.8422 1)" font-size="9.5" fill="#111">16</text>
<text class="s" transform="translate(212.50 459.50) scale(0.8653 1)" font-size="9.5" fill="#111">10:31:36</text>
<text class="s" transform="translate(252.00 459.50) scale(0.8777 1)" font-size="9.5" fill="#111">CREATE TABLE CompanyMoni2 (     EmployMoni2 VARCHAR(100),   -- employee identifier/...</text>
<text class="s" transform="translate(610.40 459.50) scale(0.8614 1)" font-size="9.5" fill="#111">0 row(s) affected</text>
<text class="s" transform="translate(968.50 459.50) scale(0.8540 1)" font-size="9.5" fill="#111">0.078 sec</text>
<text class="s" transform="translate(196.80 476.70) scale(0.8422 1)" font-size="9.5" fill="#111">17</text>
<text class="s" transform="translate(212.50 476.70) scale(0.8653 1)" font-size="9.5" fill="#111">10:31:36</text>
<text class="s" transform="translate(252.00 476.70) scale(0.8777 1)" font-size="9.5" fill="#111">INSERT INTO CompanyMoni2 (EmployMoni2, Department, Salary) VALUES ('Alice', 'HR', 50...</text>
<text class="s" transform="translate(610.40 476.70) scale(0.8861 1)" font-size="9.5" fill="#111">5 row(s) affected Records: 5  Duplicates: 0  Warnings: 0</text>
<text class="s" transform="translate(968.50 476.70) scale(0.8540 1)" font-size="9.5" fill="#111">0.000 sec</text>
<text class="s" transform="translate(196.80 493.90) scale(0.8422 1)" font-size="9.5" fill="#111">18</text>
<text class="s" transform="translate(212.50 493.90) scale(0.8653 1)" font-size="9.5" fill="#111">10:31:36</text>
<text class="s" transform="translate(252.00 493.90) scale(0.8688 1)" font-size="9.5" fill="#111">SELECT EmployMoni2, COUNT(*) AS CountPerEmployee FROM CompanyMoni2 GROUP B...</text>
<text class="s" transform="translate(610.40 493.90) scale(0.8405 1)" font-size="9.5" fill="#111">3 row(s) returned</text>
<text class="s" transform="translate(968.50 493.90) scale(0.8540 1)" font-size="9.5" fill="#111">0.000 sec / 0.000 sec</text>
<text class="s" transform="translate(196.80 511.10) scale(0.8422 1)" font-size="9.5" fill="#111">19</text>
<text class="s" transform="translate(212.50 511.10) scale(0.8653 1)" font-size="9.5" fill="#111">10:33:13</text>
<text class="s" transform="translate(252.00 511.10) scale(0.8715 1)" font-size="9.5" fill="#111">use CompanyMoni2 SELECT EmployMoni2, COUNT(*)  FROM CompanyMoni2 GROUP BY ...</text>
<text class="s" transform="translate(610.40 511.10) scale(0.8778 1)" font-size="9.5" fill="#111">Error Code: 1064. You have an error in your SQL syntax; check the manual that corresponds ...</text>
<text class="s" transform="translate(968.50 511.10) scale(0.8540 1)" font-size="9.5" fill="#111">0.000 sec</text>
<text class="s" transform="translate(887.70 63.00) scale(1.0639 1)" font-size="8.5" fill="#7b808b">SQLAdditions</text>
<text class="d" transform="translate(898.00 110.60) scale(0.9600 1)" font-size="12" fill="#8c8c8c" font-weight='bold'>Automatic context help is</text>
<text class="d" transform="translate(891.00 125.60) scale(0.9600 1)" font-size="12" fill="#8c8c8c" font-weight='bold'>disabled. Use the toolbar to</text>
<text class="d" transform="translate(899.30 141.30) scale(0.9600 1)" font-size="12" fill="#8c8c8c" font-weight='bold'>manually get help for the</text>
<text class="d" transform="translate(893.70 156.60) scale(0.9600 1)" font-size="12" fill="#8c8c8c" font-weight='bold'>current caret position or to</text>
<text class="d" transform="translate(908.60 171.30) scale(0.9600 1)" font-size="12" fill="#8c8c8c" font-weight='bold'>toggle automatic help.</text>
<text class="s" transform="translate(888.00 352.30) scale(0.9359 1)" font-size="9.5" fill="#2a78d0">Context Help</text>
<text class="s" transform="translate(951.80 352.30) scale(0.9169 1)" font-size="9.5" fill="#333">Snippets</text>
<text class="s" transform="translate(406.30 82.90) scale(0.8665 1)" font-size="9.5" fill="#111">Limit to 1000 rows</text>
<text class="s" transform="translate(984.20 82.40) scale(0.8493 1)" font-size="9.5" fill="#111">Jump to</text>
</svg>
</body></html>
